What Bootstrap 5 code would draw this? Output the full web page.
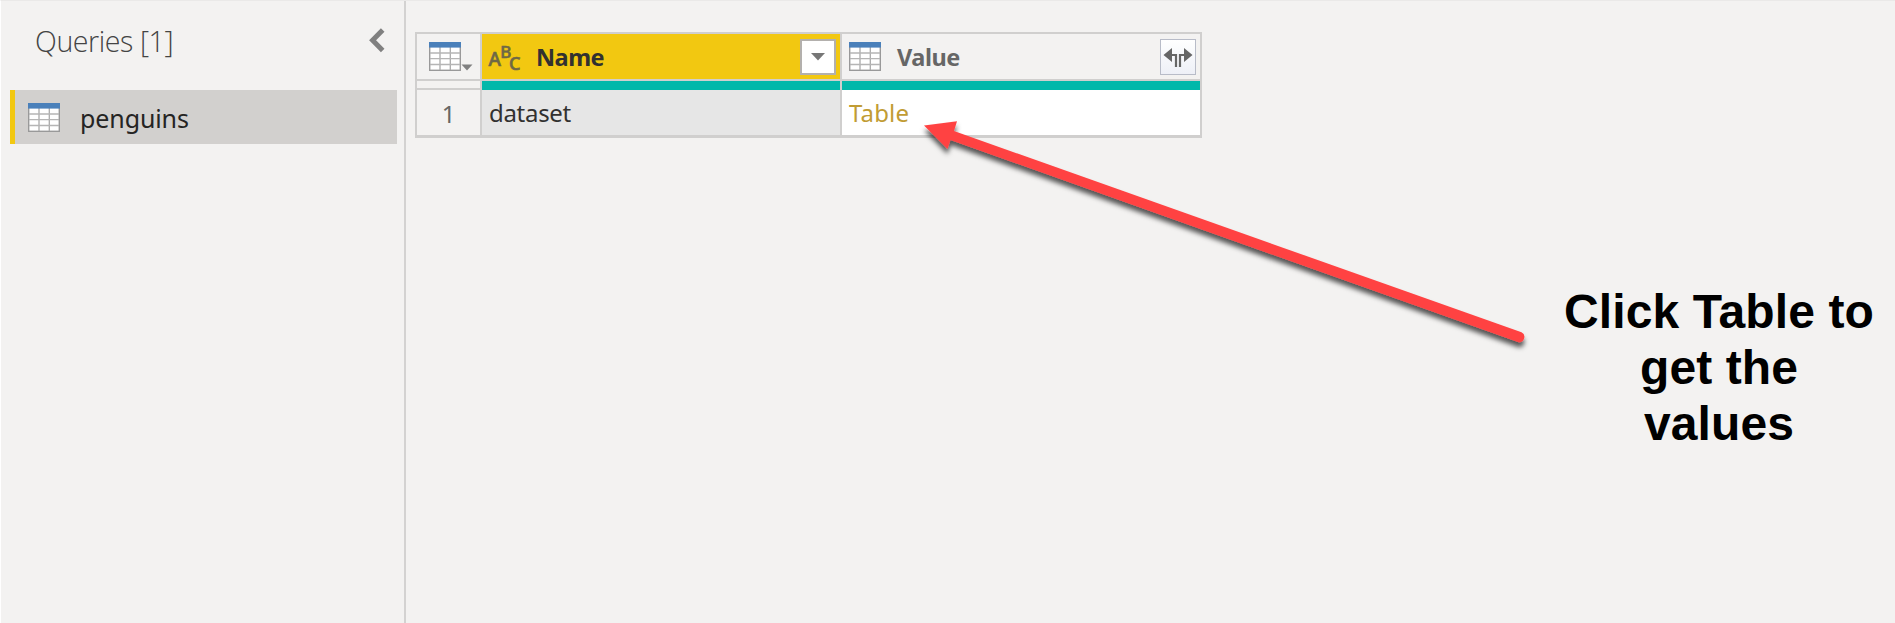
<!DOCTYPE html>
<html lang="en">
<head>
<meta charset="utf-8">
<title>Queries</title>
<link href="https://cdn.jsdelivr.net/npm/bootstrap@5.3.0/dist/css/bootstrap.min.css" rel="stylesheet">
<style>
body{background:#f3f2f1;font-family:"Noto Sans","Open Sans",sans-serif;color:#323130}
.app{border-left:1px solid #fff;border-top:1px solid #eae9e8}
.side{width:405px;border-right:2px solid #d3d2d1;padding:0 7px 0 9px}
.side-head{height:89px;padding:0 12px 0 25px}
.side-title{font-family:"Open Sans","Noto Sans",sans-serif;font-weight:300;font-size:28.5px;line-height:38px;margin-top:21px;letter-spacing:-.4px;color:#444;white-space:nowrap}
.chev{margin-top:27px}
.query{height:54px;background:#d2d0ce;border-left:5px solid #f2c811;padding-left:13px;gap:20px}
.query span{font-size:25px;line-height:34px;margin-top:2px;letter-spacing:-.1px;color:#252423}
.tbl{width:787px;height:106px;margin:31px 0 0 9px;border:2px solid #d0cfce;border-bottom-width:3px;display:grid;grid-template-columns:63px 358px 358px;grid-template-rows:47px 9px 45px;column-gap:2px;background:#d0cfce;flex:none}
.tbl>div{background:#f3f2f1;white-space:nowrap}
.tbl>.head{margin-bottom:2px}
.tbl>.corner{margin-bottom:2px}
.tbl .teal{background:#01b8aa}
.tbl b{font-size:23.5px;line-height:32px;font-weight:700;letter-spacing:-.5px}
.tbl .val{font-size:24px;line-height:32px;letter-spacing:-.3px;padding:7px 0 0 7px}
.tbl .link-val{background:#fff;color:#c19c34;letter-spacing:.15px}
.abc{overflow:visible}
.drop{width:36px;height:36px;border:2px solid #b3b0ad;background:#fff}
.expand{width:36px;height:36px;border:1px solid #b8bcc8;background:linear-gradient(#fff,#eef0f7)}
.note{width:312px;margin:283px 20px 0 auto;font:700 48px/56px "Liberation Sans",sans-serif;letter-spacing:.1px;color:#000}
.pointer{left:0;top:0;pointer-events:none}
</style>
</head>
<body>
<svg width="0" height="0" class="position-absolute"><defs>
<symbol id="grid" viewBox="0 0 32 29"><rect x=".7" y=".7" width="30.6" height="27.6" fill="#fff" stroke="#999" stroke-width="1.4"/><path d="M11 5v23M21.3 5v23" stroke="#aaa" stroke-width="1.3"/><path d="M1 11h30M1 16.7h30M1 22.5h30" stroke="#b5b5b5" stroke-width="1.3"/><path d="M0 0h32v5.6H0z" fill="#4a80ba"/></symbol>
</defs></svg>
<div class="app d-flex vh-100 overflow-hidden position-relative">
  <aside class="side flex-shrink-0">
    <div class="side-head d-flex justify-content-between align-items-start">
      <div class="side-title">Queries [1]</div>
      <svg class="chev" width="16" height="25" viewBox="0 0 16 25"><path d="M13.7 2 3.6 12.3l10.1 10.2" fill="none" stroke="#808080" stroke-width="5"/></svg>
    </div>
    <div class="query d-flex align-items-center">
      <svg width="32" height="29"><use href="#grid"/></svg><span>penguins</span>
    </div>
  </aside>
  <main class="flex-grow-1 d-flex align-items-start">
    <div class="tbl">
      <div class="head d-flex align-items-center" style="padding-left:12px"><svg width="46" height="30" viewBox="0 0 46 30"><use href="#grid" x="0" y="0" width="32" height="29"/><path d="M32.500 22.500h11l-5.500 6z" fill="#808080"/></svg></div>
      <div class="head d-flex align-items-center" style="background:#f2c811;padding:0 4px 0 6px">
        <svg class="abc" width="34" height="34" viewBox="0 0 34 34" font-family="Noto Sans" font-weight="500" font-size="18" fill="#6f6845" stroke="#6f6845" stroke-width=".6"><text x=".5" y="25.500" font-size="19">A</text><text x="12.200" y="17.500" font-size="17">B</text><text x="21" y="30">C</text></svg>
        <b style="margin-left:14px">Name</b>
        <div class="drop ms-auto d-flex align-items-center justify-content-center"><svg width="14" height="8"><path d="M0 0h14L7 7.5z" fill="#777"/></svg></div>
      </div>
      <div class="head d-flex align-items-center" style="padding:0 4px 0 7px"><svg width="32" height="29"><use href="#grid"/></svg><b style="margin-left:16px;color:#666">Value</b>
        <div class="expand ms-auto"><svg class="d-block" width="34" height="34" viewBox="0 0 34 34"><path d="M2.5 15 11 8v14zM31.5 15 23 8v14z" fill="#666"/><path d="M10 15h5v12M24 15h-5v12" stroke="#666" stroke-width="2.2" fill="none"/></svg></div>
      </div>
      <div class="corner"></div><div class="teal"></div><div class="teal"></div>
      <div class="val text-center" style="padding:8px 0 0;color:#666">1</div>
      <div class="val" style="background:#e6e6e6">dataset</div>
      <div class="val link-val">Table</div>
    </div>
    <div class="note text-center">Click Table to<br>get the<br>values</div>
  </main>
  <svg class="pointer position-absolute" width="1600" height="400" viewBox="1 1 1600 400"><defs><filter id="sh" x="-5%" y="-10%" width="110%" height="125%"><feDropShadow dx="0" dy="5" stdDeviation="2.600" flood-color="#000" flood-opacity=".65"/></filter></defs>
  <path filter="url(#sh)" fill="#ff4343" d="M924 125.500 957 121.300 954 131 1521.500 332.300A5.200 5.200 0 0 1 1518 342L950.500 140 947.500 149z"/></svg>
</div>
<script src="https://cdn.jsdelivr.net/npm/bootstrap@5.3.0/dist/js/bootstrap.bundle.min.js"></script>
</body>
</html>
